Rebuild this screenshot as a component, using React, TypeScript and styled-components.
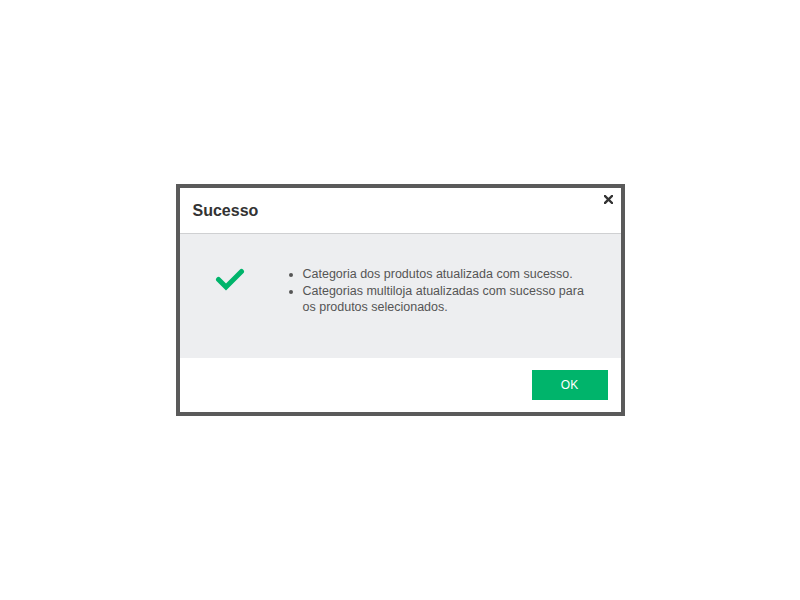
import * as React from "react";
import styled, { createGlobalStyle } from "styled-components";

const GlobalStyle = createGlobalStyle`
	html, body {
		margin: 0;
		padding: 0;
		background: #ffffff;
		font-family: "Liberation Sans", Arial, sans-serif;
	}
`;

const Page = styled.div`
	width: 800px;
	height: 600px;
	display: flex;
	align-items: center;
	justify-content: center;
`;

const Modal = styled.div`
	width: 441px;
	border: 4px solid #5a5a5a;
	background: #ffffff;
	display: flex;
	flex-direction: column;
	position: relative;
`;

const Header = styled.div`
	height: 46px;
	border-bottom: 1px solid #cfd0d2;
	display: flex;
	align-items: center;
	padding: 0 13px;
	box-sizing: border-box;
`;

const Title = styled.h4`
	margin: 0;
	padding-top: 1px;
	font-size: 16px;
	font-weight: bold;
	color: #333333;
`;

const Close = styled.button`
	position: absolute;
	top: 7px;
	right: 8px;
	width: 9px;
	height: 9px;
	padding: 0;
	border: none;
	background: none;
	cursor: pointer;
	display: flex;
	svg {
		display: block;
	}
`;

const Body = styled.div`
	height: 124px;
	background: #edeef0;
	display: flex;
	align-items: flex-start;
	box-sizing: border-box;
	padding-top: 33px;
`;

const IconColumn = styled.div`
	width: 100px;
	display: flex;
	justify-content: center;
`;

const Messages = styled.ul`
	margin: -1px 0 0 0;
	padding: 0 0 0 23px;
	list-style: disc;
	color: #555555;
	font-size: 12.5px;
	line-height: 16.5px;
	width: 290px;
`;

const Footer = styled.div`
	height: 54px;
	display: flex;
	justify-content: flex-end;
	align-items: flex-start;
	padding: 12px 13px 0 0;
	box-sizing: border-box;
`;

const OkButton = styled.button`
	width: 76px;
	height: 30px;
	border: none;
	background: #00b46b;
	color: #ffffff;
	font-family: "Liberation Sans", Arial, sans-serif;
	font-size: 12px;
	cursor: pointer;
`;

const App: React.FC = (): JSX.Element => {
	return (
		<Page>
			<GlobalStyle />
			<Modal>
				<Header>
					<Title>Sucesso</Title>
				</Header>
				<Close aria-label="Fechar">
					<svg width="9" height="9" viewBox="0 0 9 9">
						<path d="M1 1 L8 8 M8 1 L1 8" stroke="#333" strokeWidth="2.4" strokeLinecap="square" />
					</svg>
				</Close>
				<Body>
					<IconColumn>
						<svg width="30" height="24" viewBox="0 0 30 24">
							<path
								d="M3.5 12.5 L11 20 L26.5 4.5"
								fill="none"
								stroke="#00b46b"
								strokeWidth="5"
								strokeLinejoin="miter"
								strokeLinecap="round"
							/>
						</svg>
					</IconColumn>
					<Messages>
						<li>Categoria dos produtos atualizada com sucesso.</li>
						<li>Categorias multiloja atualizadas com sucesso para os produtos selecionados.</li>
					</Messages>
				</Body>
				<Footer>
					<OkButton>OK</OkButton>
				</Footer>
			</Modal>
		</Page>
	);
};

export default App;
